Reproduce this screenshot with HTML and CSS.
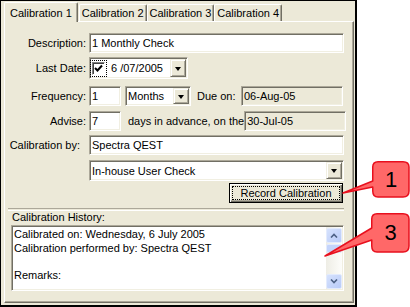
FILE: index.html
```html
<!DOCTYPE html>
<html>
<head>
    <title>Calibration</title>
    <link rel="stylesheet" href="styles.css">
</head>
<body>
    <div class="window">
        <div class="tabs">
            <div class="tab active">Calibration 1</div>
            <div class="tab">Calibration 2</div>
            <div class="tab">Calibration 3</div>
            <div class="tab">Calibration 4</div>
        </div>

        <div class="panel">
            <div class="row r-desc">
                <label class="lbl">Description:</label>
                <div class="field wide"><span class="val">1 Monthly Check</span></div>
            </div>

            <div class="row r-date">
                <label class="lbl">Last Date:</label>
                <div class="field date">
                    <span class="focus">
                        <span class="checkbox">
                            <svg width="11" height="11" viewBox="0 0 11 11"><path d="M2 5 L4.5 7.5 L9 2.5" fill="none" stroke="#000" stroke-width="2"/></svg>
                        </span>
                    </span>
                    <span class="val date-val">6 /07/2005</span>
                    <span class="drop"><i class="tri"></i></span>
                </div>
            </div>

            <div class="row r-freq">
                <label class="lbl">Frequency:</label>
                <div class="field num"><span class="val">1</span></div>
                <div class="field months">
                    <span class="val">Months</span>
                    <span class="drop"><i class="tri"></i></span>
                </div>
                <span class="text due">Due on:</span>
                <div class="field readonly"><span class="val">06-Aug-05</span></div>
            </div>

            <div class="row r-adv">
                <label class="lbl">Advise:</label>
                <div class="field num"><span class="val">7</span></div>
                <span class="text days">days in advance, on the</span>
                <div class="field readonly"><span class="val">30-Jul-05</span></div>
            </div>

            <div class="row r-by">
                <label class="lbl lbl-by">Calibration by:</label>
                <div class="field wide"><span class="val">Spectra QEST</span></div>
            </div>

            <div class="row r-type">
                <span class="lbl"></span>
                <div class="field wide">
                    <span class="val">In-house User Check</span>
                    <span class="drop"><i class="tri"></i></span>
                </div>
            </div>

            <div class="row r-btn">
                <button class="record"><span class="focus-text">Record Calibration</span></button>
            </div>

            <div class="sep"></div>

            <div class="hist-label">Calibration History:</div>
            <div class="history">
                <div class="hist-text">
                    <div>Calibrated on: Wednesday, 6 July 2005</div>
                    <div>Calibration performed by: Spectra QEST</div>
                    <div>&nbsp;</div>
                    <div>Remarks:</div>
                </div>
                <div class="scrollbar">
                    <div class="sb-btn">
                        <svg width="8" height="5" viewBox="0 0 8 5"><path d="M1 4.5 L4 1.5 L7 4.5" fill="none" stroke="#4d6185" stroke-width="1.6"/></svg>
                    </div>
                    <div class="sb-thumb"></div>
                    <div class="sb-track"></div>
                    <div class="sb-btn">
                        <svg width="8" height="5" viewBox="0 0 8 5"><path d="M1 0.5 L4 3.5 L7 0.5" fill="none" stroke="#4d6185" stroke-width="1.6"/></svg>
                    </div>
                </div>
            </div>
        </div>
    </div>

    <!-- annotation callouts -->
    <div class="callout c1">
        <svg class="bubble" width="38" height="37" viewBox="0 0 38 37">
            <path d="M6 0.75 H31 Q37 0.75 37 6 V30 Q37 36 31 36 H6 Q0.75 36 0.75 30 V26 L-29 32 L0.75 20 V6 Q0.75 0.75 6 0.75 Z"/>
        </svg>
        <span class="num-label">1</span>
    </div>
    <div class="callout c3">
        <svg class="bubble" width="39" height="40" viewBox="0 0 39 40">
            <path d="M6 0.75 H32 Q38 0.75 38 6 V33 Q38 39 32 39 H6 Q0.75 39 0.75 33 V27 L-46 43 L0.75 15 V6 Q0.75 0.75 6 0.75 Z"/>
        </svg>
        <span class="num-label">3</span>
    </div>
</body>
</html>
```

FILE: styles.css
```css
body {
    margin: 0;
    width: 410px;
    height: 307px;
    background: #fff;
    font-family: "Liberation Sans", Arial, sans-serif;
    font-size: 11px;
    color: #000;
    overflow: hidden;
}
.window {
    box-sizing: border-box;
    width: 357px;
    height: 307px;
    border: 1px solid #000;
    border-right-width: 2px;
    border-bottom-width: 2px;
    background: #ece9d8;
    padding: 1px 0 0 3px;
}

/* tabs */
.tabs {
    display: flex;
    align-items: flex-start;
    height: 19px;
}
.tab {
    box-sizing: border-box;
    height: 17px;
    margin-top: 2px;
    padding: 2px 2px 0 2px;
    line-height: 13px;
    border-top: 1px solid #fff;
    border-left: 1px solid #fff;
    border-right: 1px solid #716f64;
    box-shadow: inset -1px 0 #aca899;
    border-radius: 2px 2px 0 0;
}
.tab.active {
    position: relative;
    z-index: 1;
    height: 20px;
    margin-top: 0;
    padding: 4px 5px 0 5px;
    background: #ece9d8;
    margin-right: 1px;
}

/* panel */
.panel {
    box-sizing: border-box;
    width: 350px;
    height: 282px;
    border-top: 1px solid #fff;
    border-left: 1px solid #fff;
    border-right: 1px solid #716f64;
    border-bottom: 1px solid #716f64;
    box-shadow: inset -1px -1px #aca899;
    padding: 0 9px 0 0;
}
.row {
    display: flex;
    align-items: center;
    height: 20px;
}
.r-desc { margin-top: 11px; }
.r-date { margin-top: 4px; height: 22px; }
.r-freq { margin-top: 7px; }
.r-adv { margin-top: 5px; }
.r-by { margin-top: 4px; }
.r-type { margin-top: 5px; height: 21px; }
.r-btn { margin-top: 2px; }

.lbl {
    width: 81px;
    margin-right: 3px;
    text-align: right;
    flex: none;
}
.lbl-by {
    box-sizing: border-box;
    padding-right: 6px;
}

/* text boxes */
.field {
    box-sizing: border-box;
    display: flex;
    align-items: center;
    height: 100%;
    padding: 1px;
    background: #fff;
    border-top: 1px solid #aca899;
    border-left: 1px solid #aca899;
    border-right: 1px solid #fff;
    border-bottom: 1px solid #fff;
    box-shadow: inset 1px 1px #716f64, inset -1px -1px #f1efe2;
    white-space: nowrap;
}
.field .val {
    flex: 1;
    padding-left: 1px;
}
.wide { flex: 1; }
.num { width: 32px; flex: none; }
.months { width: 66px; margin-left: 4px; flex: none; }
.date { width: 99px; flex: none; }
.readonly {
    width: 102px;
    margin-left: auto;
    margin-right: 1px;
    background: #ece9d8;
    flex: none;
}
.text { white-space: nowrap; }
.due { margin-left: 6px; }
.days { margin-left: 7px; }

/* dropdown buttons */
.drop {
    box-sizing: border-box;
    width: 16px;
    height: 100%;
    flex: none;
    display: flex;
    align-items: center;
    justify-content: center;
    background: #ece9d8;
    border-top: 1px solid #f1efe2;
    border-left: 1px solid #f1efe2;
    border-right: 1px solid #716f64;
    border-bottom: 1px solid #716f64;
    box-shadow: inset 1px 1px #fff, inset -1px -1px #aca899;
}
.tri {
    width: 0;
    height: 0;
    border-left: 3.5px solid transparent;
    border-right: 3.5px solid transparent;
    border-top: 4px solid #000;
    margin-top: 1px;
}

/* date checkbox */
.focus {
    display: flex;
    padding: 1px;
    border: 1px dotted #000;
    margin-left: -1px;
}
.checkbox {
    box-sizing: border-box;
    width: 13px;
    height: 13px;
    background: #fff;
    border-top: 1px solid #808080;
    border-left: 1px solid #808080;
    border-right: 1px solid #fff;
    border-bottom: 1px solid #fff;
    box-shadow: inset 1px 1px #404040;
    display: flex;
    align-items: center;
    justify-content: center;
}
.field .date-val { padding-left: 4px; }

/* record button */
.record {
    box-sizing: border-box;
    width: 114px;
    height: 20px;
    margin-left: auto;
    margin-right: 1px;
    padding: 2px;
    font: inherit;
    color: #000;
    background: #ece9d8;
    border: 1px solid #000;
    box-shadow: inset 1px 1px #fff, inset -1px -1px #716f64, inset -2px -2px #aca899;
    display: flex;
}
.focus-text {
    flex: 1;
    border: 1px dotted #000;
    line-height: 12px;
    text-align: center;
}

.sep {
    margin: 5px 0 0 3px;
    height: 1px;
    border-top: 1px solid #aca899;
    border-bottom: 1px solid #fff;
}
.hist-label {
    margin-left: 7px;
    line-height: 13px;
}

/* history box */
.history {
    box-sizing: border-box;
    height: 66px;
    margin: 1px 0 0 6px;
    display: flex;
    padding: 1px;
    background: #fff;
    border-top: 1px solid #aca899;
    border-left: 1px solid #aca899;
    border-right: 1px solid #fff;
    border-bottom: 1px solid #fff;
    box-shadow: inset 1px 1px #716f64, inset -1px -1px #f1efe2;
}
.hist-text {
    flex: 1;
    padding: 1px 0 0 1px;
    line-height: 13.6px;
    white-space: nowrap;
}
.scrollbar {
    width: 16px;
    display: flex;
    flex-direction: column;
    padding-top: 1px;
    background: linear-gradient(to right, #eeede5, #fdfdfa);
}
.sb-btn {
    box-sizing: border-box;
    height: 15px;
    display: flex;
    align-items: center;
    justify-content: center;
    border: 1px solid #e3ebfd;
    border-radius: 2px;
    background: linear-gradient(to bottom right, #d6e2fd, #b9cbf8);
}
.sb-thumb {
    height: 7px;
    margin-top: 1px;
    border: 1px solid #e3ebfd;
    border-radius: 2px;
    background: #c4d4fb;
}
.sb-track { flex: 1; }

/* callouts */
.callout {
    position: absolute;
    display: flex;
    align-items: center;
    justify-content: center;
    font-family: "Liberation Sans", Arial, sans-serif;
    font-size: 22px;
}
.c1 { left: 372px; top: 161px; width: 38px; height: 37px; }
.c3 { left: 371px; top: 213px; width: 39px; height: 40px; }
.bubble {
    position: absolute;
    left: 0;
    top: 0;
    overflow: visible;
}
.bubble path {
    fill: #ff6868;
    stroke: #e8101e;
    stroke-width: 1.5;
    stroke-linejoin: round;
}
.num-label {
    position: relative;
}
```
